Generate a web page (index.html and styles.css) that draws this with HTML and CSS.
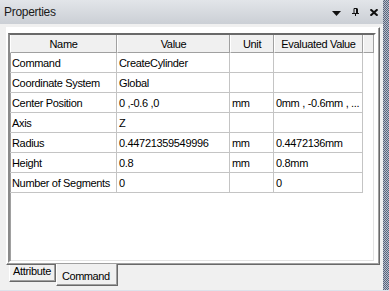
FILE: index.html
```html
<!DOCTYPE html>
<html lang="en">
<head>
    <meta charset="UTF-8">
    <title>Properties</title>
    <link rel="stylesheet" href="styles.css">
</head>
<body>
    <div class="window">
        <div class="main">
            <div class="titlebar">
                <span class="title">Properties</span>
                <div class="title-buttons">
                    <svg class="btn-menu" width="9" height="5" viewBox="0 0 9 5"><path d="M0 0h9L4.5 5z" fill="#111"/></svg>
                    <svg class="btn-pin" width="7" height="8" viewBox="0 0 7 8"><path d="M2 0.5h3M2 0.5v4.5M4.5 0.5v4.5M5.5 0.5v4.5M0 5.5h7M3.5 5.5V8" stroke="#111" stroke-width="1" fill="none"/></svg>
                    <svg class="btn-close" width="8" height="7" viewBox="0 0 8 7"><path d="M0.5 0.3L7.5 6.7M7.5 0.3L0.5 6.7" stroke="#111" stroke-width="2"/></svg>
                </div>
            </div>
            <div class="content">
                <div class="tab-page">
                    <div class="grid">
                        <table>
                            <thead>
                                <tr>
                                    <th class="c-name">Name</th>
                                    <th class="c-value">Value</th>
                                    <th class="c-unit">Unit</th>
                                    <th class="c-eval">Evaluated Value</th>
                                    <th class="c-fill"></th>
                                </tr>
                            </thead>
                            <tbody>
                                <tr><td>Command</td><td>CreateCylinder</td><td></td><td></td><td class="fill"></td></tr>
                                <tr><td>Coordinate System</td><td>Global</td><td></td><td></td><td class="fill"></td></tr>
                                <tr><td>Center Position</td><td>0 ,-0.6 ,0</td><td>mm</td><td>0mm , -0.6mm , ...</td><td class="fill"></td></tr>
                                <tr><td>Axis</td><td>Z</td><td></td><td></td><td class="fill"></td></tr>
                                <tr><td>Radius</td><td>0.44721359549996</td><td>mm</td><td>0.4472136mm</td><td class="fill"></td></tr>
                                <tr><td>Height</td><td>0.8</td><td>mm</td><td>0.8mm</td><td class="fill"></td></tr>
                                <tr><td>Number of Segments</td><td>0</td><td></td><td>0</td><td class="fill"></td></tr>
                            </tbody>
                        </table>
                    </div>
                </div>
                <div class="tabs">
                    <div class="tab">Attribute</div>
                    <div class="tab selected">Command</div>
                </div>
            </div>
        </div>
        <div class="splitter"></div>
    </div>
</body>
</html>
```

FILE: styles.css
```css
* {
    box-sizing: border-box;
}
body {
    margin: 0;
    background: #f0f0f0;
    font-family: "Liberation Sans", Arial, sans-serif;
    font-size: 11px;
    color: #000;
}
.window {
    display: flex;
    width: 389px;
    height: 291px;
    border-bottom: 1px solid #dde2ea;
}
.main {
    width: 383px;
    display: flex;
    flex-direction: column;
}
.splitter {
    width: 6px;
    background: repeating-conic-gradient(#56637e 0 25%, #b9bec8 0 50%) 0 0 / 2px 2px;
}
.titlebar {
    height: 24px;
    display: flex;
    align-items: center;
    justify-content: space-between;
    padding: 0 5px 0 4px;
    background: linear-gradient(#e2e5e9, #cbcfd5);
}
.title {
    font-size: 12px;
    letter-spacing: -0.3px;
    color: #1a1a1a;
}
.title-buttons {
    display: flex;
    align-items: center;
    gap: 11px;
}
.btn-menu {
    margin-top: 2px;
}
.btn-pin {
    margin-top: -1px;
}
.content {
    padding: 3px 0 0 6px;
}
.tab-page {
    width: 374px;
    height: 238px;
    padding: 5px 3px 1px 1px;
    background: #fff;
    border-top: 1px solid #fff;
    border-left: 1px solid #fff;
    border-right: 1px solid #696969;
    border-bottom: 1px solid #696969;
    box-shadow: inset -1px -1px 0 #a0a0a0;
}
.grid {
    width: 368px;
    height: 230px;
    background: #fff;
    border-style: solid;
    border-width: 2px;
    border-color: #696969 #fff #fff #8a8a8a;
    box-shadow: inset 1px 1px 0 #a0a0a0, inset -1px -1px 0 #e3e3e3;
    overflow: hidden;
}
table {
    width: 364px;
    table-layout: fixed;
    border-collapse: separate;
    border-spacing: 0;
    letter-spacing: -0.33px;
}
th, td {
    padding: 0 2px;
    white-space: nowrap;
    overflow: hidden;
    font-weight: normal;
}
th {
    height: 18px;
    background: #f0f0f0;
    border-left: 1px solid #fff;
    border-right: 1px solid #a0a0a0;
    border-bottom: 1px solid #a0a0a0;
    text-align: center;
}
.c-name { width: 107px; }
.c-value { width: 113px; }
.c-unit { width: 44px; }
.c-eval { width: 89px; }
.c-fill { width: 11px; }
td {
    height: 20px;
    text-align: left;
    border-right: 1px solid #c4c4c4;
    border-bottom: 1px solid #c4c4c4;
}
td.fill {
    border: none;
}
.tabs {
    display: flex;
    align-items: flex-start;
    padding-left: 3px;
}
.tab {
    height: 17px;
    padding: 0 4px 0 3px;
    line-height: 12px;
    letter-spacing: -0.33px;
    background: #f0f0f0;
    border-left: 1px solid #fff;
    border-right: 1px solid #696969;
    border-bottom: 1px solid #696969;
    box-shadow: inset -1px -1px 0 #a0a0a0;
}
.tab.selected {
    width: 62px;
    height: 22px;
    margin-top: -1px;
    padding: 6px 0 0 5px;
    letter-spacing: -0.45px;
}
```
